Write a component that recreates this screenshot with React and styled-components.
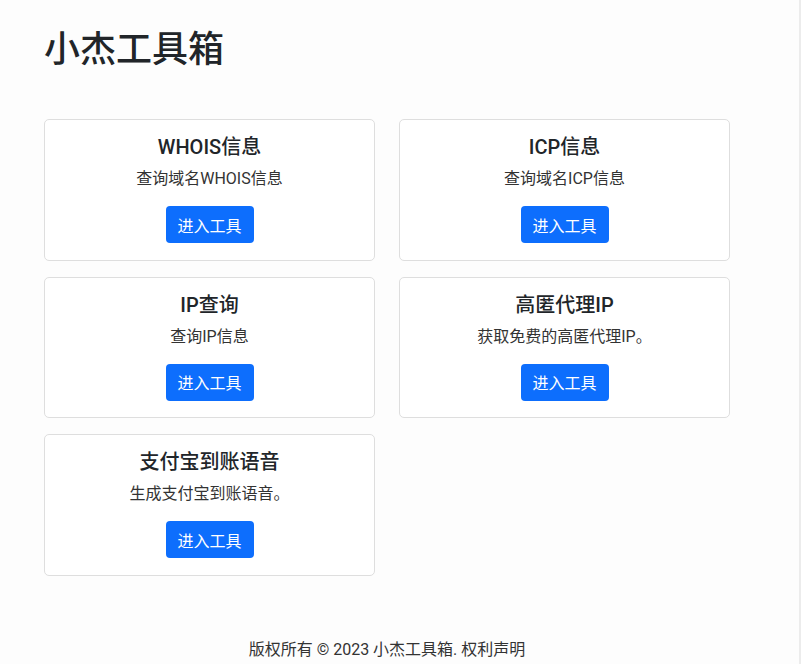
import styled, { createGlobalStyle } from "styled-components";

const GlobalStyle = createGlobalStyle`
    body {
        margin: 0;
        background: #fdfdfd;
        color: #212529;
        font-family: Roboto, "Noto Sans CJK SC", sans-serif;
    }
`;

const Page = styled.div`
    min-height: 664px;
    box-sizing: border-box;
    border-right: 2px solid #ececec;
    width: 801px;
    padding: 0 0 0 44px;
    display: flex;
    flex-direction: column;
`;

const Title = styled.h1`
    margin: 26px 0 45px;
    font-size: 36px;
    font-weight: 500;
    line-height: 48px;
    color: #212529;
`;

const Grid = styled.div`
    width: 686px;
    display: grid;
    grid-template-columns: 331px 331px;
    column-gap: 24px;
    row-gap: 16px;
`;

const Card = styled.div`
    background: #fff;
    border: 1px solid #dedede;
    border-radius: 5px;
    height: 141.5px;
    box-sizing: border-box;
    padding: 15px 16px;
    display: flex;
    flex-direction: column;
    align-items: center;
`;

const CardTitle = styled.h5`
    margin: 0 0 8px;
    font-size: 20px;
    font-weight: 500;
    line-height: 24px;
    color: #212529;
`;

const CardText = styled.p`
    margin: 0 0 15px;
    font-size: 16px;
    line-height: 24px;
    color: #333;
`;

const Button = styled.button`
    background: #0d6efd;
    color: #fff;
    border: none;
    border-radius: 4px;
    width: 88px;
    height: 37px;
    font-family: inherit;
    font-size: 16px;
    cursor: pointer;
`;

const Footer = styled.footer`
    width: 686px;
    margin-top: auto;
    padding-bottom: 2px;
    text-align: center;
    font-size: 16px;
    line-height: 24px;
    color: #333;
`;

const tools = [
    { title: "WHOIS信息", desc: "查询域名WHOIS信息" },
    { title: "ICP信息", desc: "查询域名ICP信息" },
    { title: "IP查询", desc: "查询IP信息" },
    { title: "高匿代理IP", desc: "获取免费的高匿代理IP。" },
    { title: "支付宝到账语音", desc: "生成支付宝到账语音。" },
];

const App = () => {
    return (
        <Page>
            <GlobalStyle />
            <Title>小杰工具箱</Title>
            <Grid>
                {tools.map((tool) => (
                    <Card key={tool.title}>
                        <CardTitle>{tool.title}</CardTitle>
                        <CardText>{tool.desc}</CardText>
                        <Button>进入工具</Button>
                    </Card>
                ))}
            </Grid>
            <Footer>版权所有 © 2023 小杰工具箱. 权利声明</Footer>
        </Page>
    );
};

export default App;
